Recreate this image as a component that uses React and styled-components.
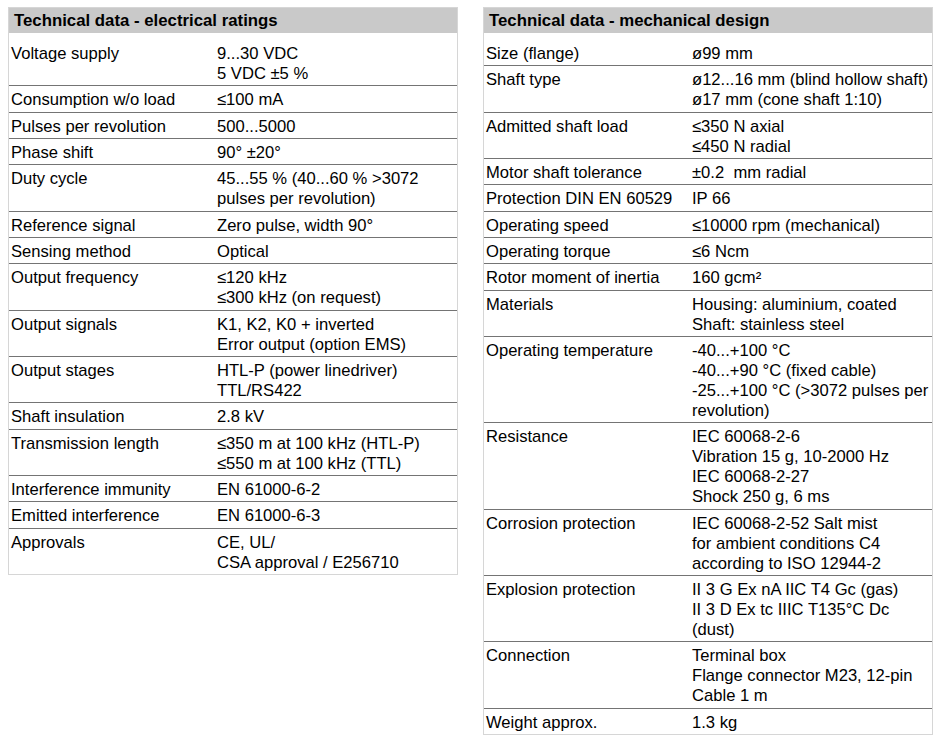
import React from "react";
import styled, { createGlobalStyle } from "styled-components";

const Global = createGlobalStyle`
  html, body { margin: 0; padding: 0; background: #ffffff; }
  body { font-family: "Liberation Sans", Arial, sans-serif; color: #000; }
`;

const Page = styled.div`
  display: flex;
  align-items: flex-start;
  gap: 25px;
  padding: 7px 0 0 8px;
`;

const Table = styled.section`
  width: 450px;
  box-sizing: border-box;
  border: 1px solid #d6d6d6;
  background: #fff;
`;

const Header = styled.h2`
  margin: 0;
  height: 25px;
  line-height: 25px;
  padding-left: 5px;
  background: #c9c9c9;
  font-size: 16.8px;
  font-weight: bold;
  white-space: nowrap;
`;

const Row = styled.div`
  display: grid;
  grid-template-columns: 206px 1fr;
  padding: ${(p) => (p.$first ? "11px" : "4px")} 0 1.33px 2px;
  border-bottom: ${(p) => (p.$last ? "none" : "1px solid #747474")};
  font-size: 16.6px;
  line-height: 20px;
`;

const Label = styled.div`
  white-space: nowrap;
`;

const Value = styled.div`
  white-space: nowrap;
`;

const Line = styled.div``;

const electrical = [
  ["Voltage supply", ["9...30 VDC", "5 VDC ±5 %"]],
  ["Consumption w/o load", ["≤100 mA"]],
  ["Pulses per revolution", ["500...5000"]],
  ["Phase shift", ["90° ±20°"]],
  ["Duty cycle", ["45...55 % (40...60 % >3072", "pulses per revolution)"]],
  ["Reference signal", ["Zero pulse, width 90°"]],
  ["Sensing method", ["Optical"]],
  ["Output frequency", ["≤120 kHz", "≤300 kHz (on request)"]],
  ["Output signals", ["K1, K2, K0 + inverted", "Error output (option EMS)"]],
  ["Output stages", ["HTL-P (power linedriver)", "TTL/RS422"]],
  ["Shaft insulation", ["2.8 kV"]],
  ["Transmission length", ["≤350 m at 100 kHz (HTL-P)", "≤550 m at 100 kHz (TTL)"]],
  ["Interference immunity", ["EN 61000-6-2"]],
  ["Emitted interference", ["EN 61000-6-3"]],
  ["Approvals", ["CE, UL/", "CSA approval / E256710"]],
];

const mechanical = [
  ["Size (flange)", ["ø99 mm"]],
  ["Shaft type", ["ø12...16 mm (blind hollow shaft)", "ø17 mm (cone shaft 1:10)"]],
  ["Admitted shaft load", ["≤350 N axial", "≤450 N radial"]],
  ["Motor shaft tolerance", ["±0.2\u00a0 mm radial"]],
  ["Protection DIN EN 60529", ["IP 66"]],
  ["Operating speed", ["≤10000 rpm (mechanical)"]],
  ["Operating torque", ["≤6 Ncm"]],
  ["Rotor moment of inertia", ["160 gcm²"]],
  ["Materials", ["Housing: aluminium, coated", "Shaft: stainless steel"]],
  [
    "Operating temperature",
    ["-40...+100 °C", "-40...+90 °C (fixed cable)", "-25...+100 °C (>3072 pulses per", "revolution)"],
  ],
  ["Resistance", ["IEC 60068-2-6", "Vibration 15 g, 10-2000 Hz", "IEC 60068-2-27", "Shock 250 g, 6 ms"]],
  ["Corrosion protection", ["IEC 60068-2-52 Salt mist", "for ambient conditions C4", "according to ISO 12944-2"]],
  ["Explosion protection", ["II 3 G Ex nA IIC T4 Gc (gas)", "II 3 D Ex tc IIIC T135°C Dc", "(dust)"]],
  ["Connection", ["Terminal box", "Flange connector M23, 12-pin", "Cable 1 m"]],
  ["Weight approx.", ["1.3 kg"]],
];

function DataTable({ title, rows }) {
  return (
    <Table>
      <Header>{title}</Header>
      {rows.map(([label, lines], i) => (
        <Row key={label} $first={i === 0} $last={i === rows.length - 1}>
          <Label>{label}</Label>
          <Value>
            {lines.map((l, j) => (
              <Line key={j}>{l}</Line>
            ))}
          </Value>
        </Row>
      ))}
    </Table>
  );
}

export default function App() {
  return (
    <>
      <Global />
      <Page>
        <DataTable title="Technical data - electrical ratings" rows={electrical} />
        <DataTable title="Technical data - mechanical design" rows={mechanical} />
      </Page>
    </>
  );
}
